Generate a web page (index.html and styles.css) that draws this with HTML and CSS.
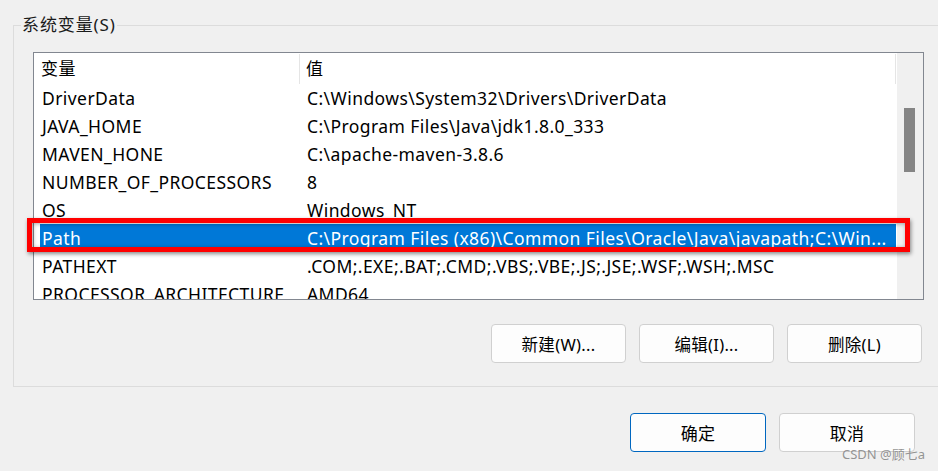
FILE: index.html
```html
<!DOCTYPE html>
<html lang="zh-CN">
<head>
<meta charset="utf-8">
<title>系统变量</title>
<link rel="stylesheet" href="styles.css">
</head>
<body>
<div class="dialog">
  <div class="group">
    <div class="group-title">系统变量(S)</div>
    <div class="listbox">
      <div class="table">
        <div class="row header"><div class="c1">变量</div><div class="c2">值</div></div>
        <div class="row"><div class="c1">DriverData</div><div class="c2">C:\Windows\System32\Drivers\DriverData</div></div>
        <div class="row"><div class="c1">JAVA_HOME</div><div class="c2">C:\Program Files\Java\jdk1.8.0_333</div></div>
        <div class="row"><div class="c1">MAVEN_HONE</div><div class="c2">C:\apache-maven-3.8.6</div></div>
        <div class="row"><div class="c1">NUMBER_OF_PROCESSORS</div><div class="c2">8</div></div>
        <div class="row"><div class="c1">OS</div><div class="c2">Windows_NT</div></div>
        <div class="row selected"><div class="c1">Path</div><div class="c2">C:\Program Files (x86)\Common Files\Oracle\Java\javapath;C:\Win...</div></div>
        <div class="row"><div class="c1">PATHEXT</div><div class="c2">.COM;.EXE;.BAT;.CMD;.VBS;.VBE;.JS;.JSE;.WSF;.WSH;.MSC</div></div>
        <div class="row"><div class="c1">PROCESSOR_ARCHITECTURE</div><div class="c2">AMD64</div></div>
      </div>
      <div class="scrollbar"><div class="thumb"></div></div>
    </div>
    <div class="buttons">
      <button class="btn">新建(W)...</button>
      <button class="btn">编辑(I)...</button>
      <button class="btn">删除(L)</button>
    </div>
  </div>
  <div class="footer">
    <button class="btn btn-primary">确定</button>
    <button class="btn">取消</button>
  </div>
  <div class="highlight"></div>
  <div class="watermark">CSDN @顾七a</div>
</div>
</body>
</html>
```

FILE: styles.css
```css
html, body {
  margin: 0;
  padding: 0;
  background: #f0f0f0;
}
body {
  width: 938px;
  height: 471px;
  overflow: hidden;
  font-family: "Noto Sans", "Noto Sans CJK SC", sans-serif;
  color: #000;
}
.dialog {
  position: relative;
  width: 938px;
  height: 471px;
  padding-top: 25px;
  padding-left: 13px;
  box-sizing: border-box;
}
.group {
  position: relative;
  width: 960px;
  box-sizing: border-box;
  border: 1px solid #dcdcdc;
  padding: 26px 0 23px 19px;
}
.group-title {
  position: absolute;
  top: -12px;
  left: 7px;
  padding: 0 1px;
  background: #f0f0f0;
  font-size: 17px;
  line-height: 22px;
  letter-spacing: 0.9px;
  color: #1a1a1a;
}
.listbox {
  display: flex;
  width: 891px;
  height: 248px;
  box-sizing: border-box;
  border: 1px solid #828790;
  background: #fff;
  overflow: hidden;
}
.table {
  width: 862px;
  flex: none;
}
.row {
  display: flex;
  height: 28px;
  align-items: center;
  font-size: 17.5px;
  letter-spacing: 0.42px;
  white-space: nowrap;
}
.row .c1 {
  width: 267px;
  flex: none;
  box-sizing: border-box;
  padding-left: 8px;
  overflow: hidden;
}
.row .c2 {
  flex: 1;
  padding-left: 6px;
  overflow: hidden;
}
.row.header {
  height: 31px;
  font-size: 17px;
  letter-spacing: 0.5px;
}
.row.header .c1 {
  width: 266px;
  padding-left: 7px;
  height: 30px;
  line-height: 30px;
  border-right: 1px solid #e5e5e5;
}
.row.header .c2 {
  height: 30px;
  line-height: 30px;
  border-right: 1px solid #e5e5e5;
}
.row.selected {
  background: linear-gradient(90deg, transparent 6px, #0078d7 6px);
  color: #fff;
}
.scrollbar {
  position: relative;
  width: 26px;
  margin-left: 1px;
  background: #f0f0f0;
}
.thumb {
  position: absolute;
  top: 55px;
  left: 7px;
  width: 11px;
  height: 64px;
  background: #858585;
}
.buttons {
  display: flex;
  justify-content: flex-end;
  gap: 13px;
  width: 889px;
  margin-top: 24px;
}
.btn {
  width: 135px;
  height: 39px;
  box-sizing: border-box;
  border: 1px solid #d0d0d0;
  border-radius: 4px;
  background: #fdfdfd;
  font-family: "Noto Sans", "Noto Sans CJK SC", sans-serif;
  font-size: 16.5px;
  letter-spacing: 0.3px;
  color: #000;
  padding: 0;
}
.footer {
  display: flex;
  justify-content: flex-end;
  gap: 13px;
  margin-top: 26px;
  padding-right: 23px;
}
.footer .btn {
  width: 136px;
  font-size: 17px;
}
.btn-primary {
  border-color: #0067c0;
}
.highlight {
  position: absolute;
  left: 27px;
  top: 218px;
  width: 883px;
  height: 34px;
  box-sizing: border-box;
  border: 5px solid #f00;
  box-shadow: 1px 2px 4px rgba(0,0,0,0.45), inset 1px 1px 4px rgba(0,0,0,0.35);
}
.watermark {
  position: absolute;
  top: 445px;
  left: 842px;
  font-size: 13px;
  line-height: 18px;
  color: rgba(130,130,130,0.85);
  font-family: "Noto Sans", "Noto Sans CJK SC", sans-serif;
}
```
